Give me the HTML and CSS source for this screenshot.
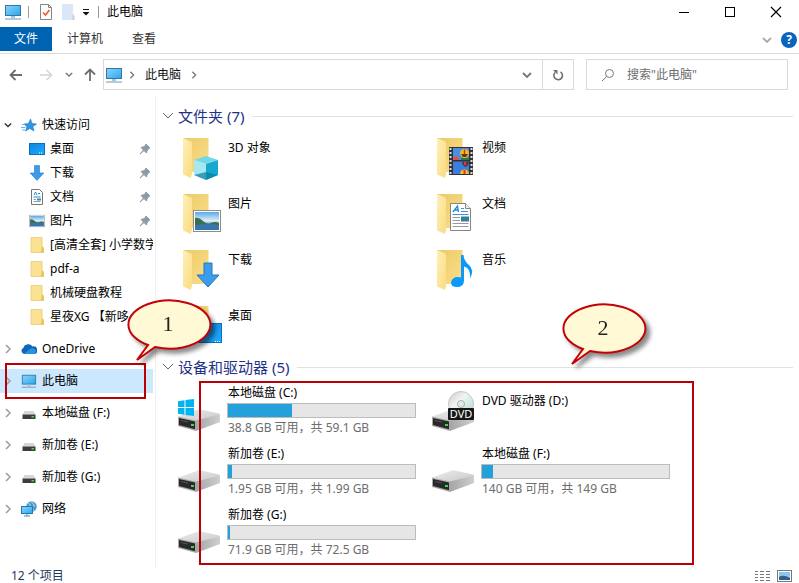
FILE: index.html
```html
<!DOCTYPE html>
<html lang="zh-CN">
<head>
<meta charset="utf-8">
<title>此电脑</title>
<link rel="stylesheet" href="styles.css">
</head>
<body>
<svg class="defs" width="0" height="0" aria-hidden="true">
  <defs>
    <linearGradient id="gBack" x1="0" y1="0" x2="1" y2="1"><stop offset="0" stop-color="#eec966"/><stop offset="1" stop-color="#f8df8c"/></linearGradient>
    <linearGradient id="gFlap" x1="0" y1="0" x2="1" y2="1"><stop offset="0" stop-color="#fff0b8"/><stop offset="1" stop-color="#fadb80"/></linearGradient>
    <linearGradient id="gScreen" x1="0" y1="0" x2="1" y2="1"><stop offset="0" stop-color="#8bd6fb"/><stop offset="1" stop-color="#2ba5ee"/></linearGradient>
    <linearGradient id="gDesk" x1="0" y1="0" x2="1" y2="1"><stop offset="0" stop-color="#0b86e0"/><stop offset="1" stop-color="#22aaff"/></linearGradient>
    <linearGradient id="gTop" x1="0" y1="0" x2="1" y2="1"><stop offset="0" stop-color="#ececec"/><stop offset="1" stop-color="#c9c9cb"/></linearGradient>
    <linearGradient id="gSide" x1="0" y1="0" x2="1" y2="0"><stop offset="0" stop-color="#a5a5a8"/><stop offset="1" stop-color="#cfcfd1"/></linearGradient>
    <linearGradient id="gSky" x1="0" y1="0" x2="0" y2="1"><stop offset="0" stop-color="#5aa9e6"/><stop offset="0.5" stop-color="#dff1fa"/><stop offset="0.7" stop-color="#4b87a8"/><stop offset="1" stop-color="#2e5f92"/></linearGradient>
    <linearGradient id="gDisc" x1="0" y1="0" x2="1" y2="1"><stop offset="0" stop-color="#c9cbd0"/><stop offset="0.4" stop-color="#f3f3f5"/><stop offset="0.6" stop-color="#d3efe6"/><stop offset="1" stop-color="#c4c6cb"/></linearGradient>
    <symbol id="folder" viewBox="0 0 48 48">
      <path d="M7 2H32.500V36H12Z" fill="url(#gBack)"/>
      <path d="M7 2L16 6V37L15 42L7 38.500Z" fill="url(#gFlap)"/>
    </symbol>
    <symbol id="folder-small" viewBox="0 0 16 16">
      <path d="M2 .5H13V9L14.500 11V15.500H2Z" fill="#fbe293" stroke="#ecca6c" stroke-width=".8"/>
      <path d="M13 9L12 15.500H14.500V11Z" fill="#e6bc55"/>
    </symbol>
    <symbol id="monitor" viewBox="0 0 18 16">
      <rect x="1.500" y="1.500" width="15" height="10" fill="url(#gScreen)" stroke="#35789f"/>
      <path d="M7 12h4v2H7z" fill="#9fc7df"/><path d="M1 15h16" stroke="#7596a9"/>
    </symbol>
    <symbol id="drive" viewBox="0 0 48 48">
      <path d="M2 29.500L22 22.500Q23 22 24 22.300L43 26.500Q44 27 44 28L20 34Z" fill="url(#gTop)"/>
      <path d="M20 33.500L44 27.500V35L20 44Z" fill="url(#gSide)"/>
      <path d="M2 29.500L20 33.500V44L2 39Z" fill="#a9a9ab"/>
      <path d="M3 31L19 34.500V42.300L3 38Z" fill="#29292b"/>
      <path d="M5 33.500L12 35" stroke="#555" /><rect x="15" y="37" width="3" height="2" fill="#2fe52f"/>
    </symbol>
    <symbol id="drive-small" viewBox="0 0 16 16">
      <path d="M3.500 6H12.500L14.500 9.500H1.500Z" fill="#d6d6d8"/><rect x="1.500" y="9.500" width="13" height="4.500" fill="#3d3d3f"/><rect x="10.500" y="11" width="2.500" height="1.500" fill="#38e038"/>
    </symbol>
    <symbol id="arrow-down" viewBox="0 0 24 26">
      <path d="M8 1H16V13H23L12 25L1 13H8Z" fill="#3c9beb" stroke="#2078c2"/>
    </symbol>
    <symbol id="chev-right" viewBox="0 0 8 10"><path d="M2 1L6 5L2 9" fill="none" stroke="currentColor" stroke-width="1.600"/></symbol>
    <symbol id="chev-down" viewBox="0 0 10 8"><path d="M1 2L5 6L9 2" fill="none" stroke="currentColor" stroke-width="1.800"/></symbol>
    <symbol id="chev-wide" viewBox="0 0 12 8"><path d="M1 1L6 6L11 1" fill="none" stroke="currentColor"/></symbol>
    <symbol id="pin" viewBox="0 0 12 12"><path d="M7 1L11 5L9.500 5.500L8 8L7.500 10L5 7.500L1 11L4.500 7L2 4.500L4 4L6.500 2.500Z" fill="#8c9aa6" stroke="#8c9aa6" stroke-linejoin="round"/></symbol>
    <symbol id="photo" viewBox="0 0 28 22">
      <rect x=".5" y=".5" width="27" height="21" fill="#fff" stroke="#8d8d8d"/><rect x="2" y="2" width="24" height="18" fill="url(#gSky)"/>
      <path d="M2 8Q6 7 10 11T18 13T26 13V15H2Z" fill="#3c6e50"/><path d="M2 15.500Q14 13 26 15V20H2Z" fill="#3a74ad"/>
    </symbol>
  </defs>
</svg>

<div class="window">
  <header class="titlebar">
    <svg class="app-icon" viewBox="0 0 18 16"><use href="#monitor"/></svg>
    <span class="divider"></span>
    <button class="quick" aria-label="属性"><svg width="14" height="16" viewBox="0 0 14 16"><path d="M1.500.5H9.500L12.500 3.500V15.500H1.500Z" fill="#fff" stroke="#858585"/><path d="M9.500.5V3.500H12.500" fill="none" stroke="#858585"/><path d="M4 8.500L6.500 11L10.500 6" fill="none" stroke="#ec5a24" stroke-width="1.600"/></svg></button>
    <button class="quick" aria-label="新建文件夹"><svg width="14" height="16" viewBox="0 0 14 16"><path d="M1 0H12V10L13.500 12V16H1Z" fill="#dbe6f6"/><path d="M12 10L11 16H13.500V12Z" fill="#c3d3ea"/></svg></button>
    <button class="quick quick-more" aria-label="自定义快速访问工具栏"><svg width="8" height="8" viewBox="0 0 8 8"><path d="M1 1.500H7" stroke="#111"/><path d="M.5 4H7.500L4 7.500Z" fill="#111"/></svg></button>
    <span class="divider"></span>
    <h1 class="title">此电脑</h1>
    <div class="window-buttons">
      <button aria-label="最小化"><svg width="12" height="12" viewBox="0 0 12 12"><path d="M1 6.500H11" stroke="#000"/></svg></button>
      <button aria-label="最大化"><svg width="12" height="12" viewBox="0 0 12 12"><rect x="1.500" y="1.500" width="9" height="9" fill="none" stroke="#000"/></svg></button>
      <button aria-label="关闭"><svg width="12" height="12" viewBox="0 0 12 12"><path d="M1 1L11 11M11 1L1 11" stroke="#000" stroke-width="1.200"/></svg></button>
    </div>
  </header>

  <div class="ribbon">
    <button class="tab tab-file">文件</button>
    <button class="tab">计算机</button>
    <button class="tab">查看</button>
    <div class="ribbon-end">
      <button class="plain light" aria-label="展开功能区"><svg width="10" height="8"><use href="#chev-down"/></svg></button>
      <button class="help" aria-label="帮助">?</button>
    </div>
  </div>

  <div class="toolbar">
    <div class="history">
      <button class="plain" aria-label="后退"><svg width="14" height="14" viewBox="0 0 14 14"><path d="M13 7H2M6.500 2L1.500 7L6.500 12" fill="none" stroke="#6d6d6d" stroke-width="1.800"/></svg></button>
      <button class="plain" aria-label="前进"><svg width="14" height="14" viewBox="0 0 14 14"><path d="M1 7H12M7.500 2L12.500 7L7.500 12" fill="none" stroke="#d5d5d5" stroke-width="1.500"/></svg></button>
      <button class="plain history-more" aria-label="最近浏览的位置"><svg width="8" height="7" viewBox="0 0 10 8"><use href="#chev-down"/></svg></button>
      <button class="plain" aria-label="上移"><svg width="14" height="14" viewBox="0 0 14 14"><path d="M7 13V2M2 6.500L7 1.500L12 6.500" fill="none" stroke="#6d6d6d" stroke-width="1.800"/></svg></button>
    </div>
    <div class="address">
      <svg class="address-icon" viewBox="0 0 18 16"><use href="#monitor"/></svg>
      <svg class="crumb-arrow" viewBox="0 0 8 10"><use href="#chev-right"/></svg>
      <button class="crumb">此电脑</button>
      <svg class="crumb-arrow" viewBox="0 0 8 10"><use href="#chev-right"/></svg>
      <button class="address-button address-more" aria-label="以前的位置"><svg width="10" height="8"><use href="#chev-down"/></svg></button>
      <button class="address-button refresh" aria-label="刷新"><svg width="12" height="12" viewBox="0 0 12 12"><path d="M8.500 2.800A4.300 4.300 0 1 1 3 3.500" fill="none" stroke="#6d6d6d" stroke-width="1.600"/><path d="M1 1H5.500V5.500Z" fill="#6d6d6d"/></svg></button>
    </div>
    <label class="search">
      <svg width="14" height="14" viewBox="0 0 14 14"><circle cx="8.500" cy="5.500" r="4" fill="none" stroke="#777"/><path d="M5.700 8.500L1 13" stroke="#777"/></svg>
      <input type="search" aria-label="搜索" placeholder="搜索&quot;此电脑&quot;">
    </label>
  </div>

  <div class="body">
    <nav class="sidebar" aria-label="导航">
      <ul class="tree">
        <li>
          <a class="node" href="#"><svg class="twist open" viewBox="0 0 10 8"><use href="#chev-down"/></svg><svg class="icon" viewBox="0 0 16 16"><path d="M9.500 2L11 6.500L15.500 7L11.800 9.500L13 14L8.800 11.500L4.500 14L6 9.800L3 7L7.500 6.500Z" fill="#2b95e6" stroke="#1675c4" stroke-width=".6"/><path d="M1 7.500H4M0 10.500H4.500M1 13H4" stroke="#64b5f1"/></svg><span class="label">快速访问</span></a>
          <ul class="branch">
            <li><a class="node" href="#"><svg class="icon" viewBox="0 0 16 16"><rect x=".5" y="2.500" width="15" height="11" fill="url(#gDesk)" stroke="#0c6fbd"/><path d="M10 12h4" stroke="#fff" stroke-dasharray="1 1"/></svg><span class="label">桌面</span><svg class="pin"><use href="#pin"/></svg></a></li>
            <li><a class="node" href="#"><svg class="icon" viewBox="0 0 24 26"><use href="#arrow-down"/></svg><span class="label">下载</span><svg class="pin"><use href="#pin"/></svg></a></li>
            <li><a class="node" href="#"><svg class="icon" viewBox="0 0 16 16"><path d="M2.500.5H10.500L13.500 3.500V15.500H2.500Z" fill="#fff" stroke="#777"/><path d="M5 6L6.500 3L8 6M9 4.500H11M4.500 8H11.500" fill="none" stroke="#268bd2"/><path d="M4.500 10.500H7M4.500 12.500H11.500" stroke="#8aa"/><path d="M8 9.500H12V11.500H8Z" fill="#3c86b9"/></svg><span class="label">文档</span><svg class="pin"><use href="#pin"/></svg></a></li>
            <li><a class="node" href="#"><svg class="icon" viewBox="0 0 28 22"><use href="#photo"/></svg><span class="label">图片</span><svg class="pin"><use href="#pin"/></svg></a></li>
            <li><a class="node" href="#"><svg class="icon"><use href="#folder-small"/></svg><span class="label">[高清全套] 小学数学</span></a></li>
            <li><a class="node" href="#"><svg class="icon"><use href="#folder-small"/></svg><span class="label">pdf-a</span></a></li>
            <li><a class="node" href="#"><svg class="icon"><use href="#folder-small"/></svg><span class="label">机械硬盘教程</span></a></li>
            <li><a class="node" href="#"><svg class="icon"><use href="#folder-small"/></svg><span class="label">星夜XG 【新哆</span></a></li>
          </ul>
        </li>
        <li><a class="node" href="#"><svg class="twist" viewBox="0 0 8 10"><use href="#chev-right"/></svg><svg class="icon" viewBox="0 0 16 16"><path d="M3.500 13A3.300 3.300 0 0 1 2.500 6.700A5 5 0 0 1 11.500 5.500A3.800 3.800 0 0 1 13.500 13Z" fill="#0f67b8"/><path d="M3 13L9 8Q10 6.800 12.500 7.500A3 3 0 0 1 13.500 13Z" fill="#2a93e0"/></svg><span class="label">OneDrive</span></a></li>
        <li class="marked">
          <a class="node selected" href="#" aria-current="page"><svg class="twist" viewBox="0 0 8 10"><use href="#chev-right"/></svg><svg class="icon" viewBox="0 0 18 16"><use href="#monitor"/></svg><span class="label">此电脑</span></a>
          <span class="frame frame-node"></span>
          <svg class="callout callout-node" viewBox="0 0 96 72"><path d="M22 48A41 24 0 1 1 29 50L11 63Z"/><text x="42" y="34">1</text></svg>
        </li>
        <li><a class="node" href="#"><svg class="twist" viewBox="0 0 8 10"><use href="#chev-right"/></svg><svg class="icon"><use href="#drive-small"/></svg><span class="label">本地磁盘 (F:)</span></a></li>
        <li><a class="node" href="#"><svg class="twist" viewBox="0 0 8 10"><use href="#chev-right"/></svg><svg class="icon"><use href="#drive-small"/></svg><span class="label">新加卷 (E:)</span></a></li>
        <li><a class="node" href="#"><svg class="twist" viewBox="0 0 8 10"><use href="#chev-right"/></svg><svg class="icon"><use href="#drive-small"/></svg><span class="label">新加卷 (G:)</span></a></li>
        <li><a class="node" href="#"><svg class="twist" viewBox="0 0 8 10"><use href="#chev-right"/></svg><svg class="icon" viewBox="0 0 16 16"><circle cx="10.500" cy="5.500" r="5.200" fill="#4b9cc9"/><path d="M7 2Q10 3 9 6T13 9M10 .5Q14 3 13 6" fill="none" stroke="#b9dfef"/><rect x=".5" y="5.500" width="11" height="7" fill="url(#gScreen)" stroke="#2178b5"/><path d="M3 15H9M6 13V15" stroke="#5b8ca8"/></svg><span class="label">网络</span></a></li>
      </ul>
    </nav>

    <main class="content">
      <section>
        <h2 class="group"><svg width="12" height="8"><use href="#chev-wide"/></svg>文件夹 (7)</h2>
        <ul class="tiles">
          <li class="tile"><svg class="tile-icon" viewBox="0 0 48 48"><use href="#folder"/><path d="M18 24L30 20L42 24L30 28Z" fill="#6fd8ea"/><path d="M18 24L30 28V44L18 39Z" fill="#a6e8ef"/><path d="M42 24L30 28V44L42 39Z" fill="#16a9cf"/><path d="M30 36L42 39L30 44L18 39Z" fill="#087f9f" opacity=".7"/></svg><span class="tile-name">3D 对象</span></li>
          <li class="tile"><svg class="tile-icon" viewBox="0 0 48 48"><use href="#folder"/><rect x="19" y="11" width="24" height="28" fill="#333"/><path d="M20.500 12V39M41.500 12V39" stroke="#ddd" stroke-width="2" stroke-dasharray="2 2"/><rect x="23" y="12" width="16" height="12" fill="#4a8fe6"/><rect x="23" y="25.500" width="16" height="12.500" fill="#3c7ddd"/><path d="M30 17.500A4.500 4.500 0 0 1 39 17.500Q38.500 20 36 22H33Q30.500 20 30 17.500Z" fill="#f5bd1c"/><path d="M34.500 13.500V20" stroke="#d32f1e" stroke-width="1.500"/><path d="M31 18H38L36 21H33Z" fill="#5a3a20"/><path d="M23 22L26 20L29 22V24H23Z" fill="#e2533f"/><path d="M31 22H39V24H31Z" fill="#2f7a3a"/><path d="M32 26H39Q39 29 35.500 31Q32 29 32 26Z" fill="#43403a"/><path d="M34 26H36V29H34Z" fill="#e33"/><path d="M30 38A4.500 4.500 0 0 1 39 38Z" fill="#f5c021"/><path d="M33.500 38V34H35.500V38Z" fill="#d33"/></svg><span class="tile-name">视频</span></li>
          <li class="tile"><svg class="tile-icon" viewBox="0 0 48 48"><use href="#folder"/><use href="#photo" x="17" y="18" width="28" height="22"/></svg><span class="tile-name">图片</span></li>
          <li class="tile"><svg class="tile-icon" viewBox="0 0 48 48"><use href="#folder"/><path d="M20.500 11.500H35.500L40.500 16.500V38.500H20.500Z" fill="#fff" stroke="#858585"/><path d="M35.500 11.500V16.500H40.500" fill="#eee" stroke="#858585"/><path d="M23 20L27.500 14L28.500 20M24.500 18H28" fill="none" stroke="#1e88d8" stroke-width="1.300"/><path d="M31 16.500H34M31 19.500H38M22.500 22.500H38.500" stroke="#3298de"/><path d="M22.500 25.500H30M22.500 28.500H30M22.500 31.500H38.500M22.500 34.500H38.500" stroke="#999"/><rect x="31" y="24.500" width="8" height="5" fill="#387c9c"/></svg><span class="tile-name">文档</span></li>
          <li class="tile"><svg class="tile-icon" viewBox="0 0 48 48"><use href="#folder"/><use href="#arrow-down" x="20" y="14" width="24" height="26"/></svg><span class="tile-name">下载</span></li>
          <li class="tile"><svg class="tile-icon" viewBox="0 0 48 48"><use href="#folder"/><path d="M31 7H33.500Q34 13 38.500 16.500Q45 22 40 30.500Q41 20 34 18.500V33Q33.500 39 27 39Q21 39 21 34.500Q22 29 28 29Q30 29 31 29.600Z" fill="#0a9afa"/></svg><span class="tile-name">音乐</span></li>
          <li class="tile"><svg class="tile-icon" viewBox="0 0 48 48"><use href="#folder"/><rect x="17.500" y="19.500" width="28" height="19" fill="url(#gDesk)" stroke="#0c6fbd"/><path d="M39 37.500H45" stroke="#fff" stroke-dasharray="1 1"/></svg><span class="tile-name">桌面</span></li>
        </ul>
      </section>

      <section class="devices">
        <h2 class="group"><svg width="12" height="8"><use href="#chev-wide"/></svg>设备和驱动器 (5)</h2>
        <ul class="tiles">
          <li class="device"><svg class="tile-icon" viewBox="0 0 48 48"><use href="#drive"/><path d="M2 14.200L8.500 13.200V20H2ZM9.500 13L18 12V20H9.500ZM2 21H8.500V27.700L2 26.800ZM9.500 21H18V29L9.500 27.900Z" fill="#00b4f1"/></svg>
            <div class="device-info"><span class="device-name">本地磁盘 (C:)</span><progress value="34" max="100" aria-label="C 盘已用空间"></progress><span class="device-space">38.8 GB 可用，共 59.1 GB</span></div></li>
          <li class="device optical"><svg class="tile-icon" viewBox="0 0 48 48"><use href="#drive"/><circle cx="31" cy="17" r="12.500" fill="url(#gDisc)" stroke="#c5c5c8"/><circle cx="31" cy="17" r="3.500" fill="#eee" stroke="#aaa"/><circle cx="31" cy="17" r="1.500" fill="#fff" stroke="#bbb" stroke-width=".5"/><rect x="18" y="21" width="26" height="12" rx="1" fill="#161616"/><text class="disc-label" x="31" y="31">DVD</text></svg>
            <div class="device-info"><span class="device-name">DVD 驱动器 (D:)</span></div></li>
          <li class="device"><svg class="tile-icon"><use href="#drive"/></svg>
            <div class="device-info"><span class="device-name">新加卷 (E:)</span><progress value="2" max="100" aria-label="E 盘已用空间"></progress><span class="device-space">1.95 GB 可用，共 1.99 GB</span></div></li>
          <li class="device"><svg class="tile-icon"><use href="#drive"/></svg>
            <div class="device-info"><span class="device-name">本地磁盘 (F:)</span><progress value="6" max="100" aria-label="F 盘已用空间"></progress><span class="device-space">140 GB 可用，共 149 GB</span></div></li>
          <li class="device"><svg class="tile-icon"><use href="#drive"/></svg>
            <div class="device-info"><span class="device-name">新加卷 (G:)</span><progress value="1" max="100" aria-label="G 盘已用空间"></progress><span class="device-space">71.9 GB 可用，共 72.5 GB</span></div></li>
        </ul>
        <span class="frame frame-devices"></span>
        <svg class="callout callout-devices" viewBox="0 0 96 72"><path d="M22 48A41 24 0 1 1 29 50L11 63Z"/><text x="42" y="34">2</text></svg>
      </section>
    </main>
  </div>

  <footer class="status">
    <span>12 个项目</span>
    <div class="views">
      <button class="plain" aria-label="详细信息"><svg width="16" height="12" viewBox="0 0 16 12"><path d="M0 1.500H4M0 4.500H4M0 7.500H4M0 10.500H4" stroke="#777" stroke-dasharray="3 1"/><path d="M5 1.500H9M5 4.500H9M5 7.500H9M5 10.500H9M11 1.500H15M11 4.500H15M11 7.500H15M11 10.500H15" stroke="#777"/></svg></button>
      <button class="plain" aria-label="大图标"><svg width="16" height="12" viewBox="0 0 16 12"><rect x=".5" y=".5" width="14" height="11" fill="#fff" stroke="#777"/><rect x="2" y="2" width="11" height="8" fill="#8cc6ee"/><path d="M2 7Q6 4 13 8V10H2Z" fill="#315f8c"/></svg></button>
    </div>
  </footer>
</div>
</body>
</html>
```
FILE: styles.css
```css
* { box-sizing: border-box; }

body {
  margin: 0;
  background: #fff;
  color: #111;
  font: 12px/16px "Noto Sans", "Noto Sans CJK SC", sans-serif;
}

ul { list-style: none; margin: 0; padding: 0; }
a { color: inherit; text-decoration: none; }
svg { display: block; flex: none; }

button {
  margin: 0;
  padding: 0;
  border: 0;
  background: none;
  color: inherit;
  font: inherit;
}

.defs { position: absolute; }

.window {
  display: flex;
  flex-direction: column;
  min-height: 100vh;
}

/* Title bar */
.titlebar {
  display: flex;
  align-items: center;
  height: 24px;
  margin-bottom: 3px;
  padding-left: 4px;
}

.app-icon { width: 18px; height: 16px; }
.divider { width: 1px; height: 12px; margin: 0 6px; background: #999; }
.quick { display: flex; width: 22px; justify-content: center; }
.quick-more { width: 14px; }
.quick-more + .divider { margin: 0 8px 0 5px; }
.title { margin: 0; font-size: 12px; font-weight: 400; color: #000; }
.window-buttons { display: flex; height: 24px; margin-left: auto; }
.window-buttons button { display: grid; place-items: center; width: 46px; }

/* Ribbon */
.ribbon {
  display: flex;
  gap: 1px;
  height: 27px;
  border-bottom: 1px solid #dadbdc;
}

.tab { height: 24px; padding: 0 14px; color: #333; }
.tab-file { background: #0063b1; color: #fff; }

.ribbon-end {
  display: flex;
  align-items: center;
  gap: 9px;
  margin-left: auto;
  padding-right: 2px;
}

.plain { display: grid; place-items: center; color: #777; }
.light { color: #aaa; }

.help {
  width: 16px;
  height: 16px;
  border-radius: 50%;
  background: #0a64bd;
  color: #fff;
  font-weight: 700;
}

/* Address row */
.toolbar {
  display: flex;
  height: 42px;
  padding: 5px 11px 6px 9px;
}

.history { display: flex; align-items: center; width: 94px; }
.history .plain { width: 14px; margin-right: 16px; }
.history .plain:nth-child(2) { margin-right: 0; }
.history .history-more { width: 8px; margin: 0 10px 0 12px; }

.address {
  display: flex;
  align-items: center;
  flex: 1;
  margin-right: 12px;
  border: 1px solid #d9d9d9;
  color: #777;
}

.address-icon { width: 18px; height: 16px; margin-left: 1px; }
.crumb-arrow { width: 8px; height: 8px; margin: 0 5px; }
.crumb { padding: 0 4px; color: #111; }
.address-button { display: grid; place-items: center; align-self: stretch; width: 30px; }
.address-more { margin-left: auto; }
.refresh { width: 31px; border-left: 1px solid #d9d9d9; }

.search {
  display: flex;
  align-items: center;
  gap: 12px;
  width: 202px;
  padding-left: 14px;
  border: 1px solid #d9d9d9;
}

.search input {
  flex: 1;
  min-width: 0;
  padding: 0;
  border: 0;
  outline: 0;
  background: none;
  font: inherit;
}

.search input::placeholder { color: #6d6d6d; opacity: 1; }

/* Navigation tree */
.body { display: flex; flex: 1; }

.sidebar {
  flex: none;
  width: 156px;
  padding: 17px 2px 0 0;
  border-right: 1px solid #f0f0f0;
}

.tree { display: grid; grid-template-columns: 100%; gap: 8px; }

.node {
  display: flex;
  align-items: center;
  gap: 5px;
  height: 24px;
  padding-left: 4px;
  color: #000;
}

.branch .node { padding-left: 29px; }
.selected { background: #cce8ff; }
.twist { width: 8px; height: 10px; margin-right: 4px; color: #a0a0a0; }
.open { color: #333; }
.icon { width: 16px; height: 16px; }
.label { flex: 1; min-width: 0; overflow: hidden; white-space: nowrap; }
.pin { width: 12px; height: 12px; margin-right: 2px; }
.marked { position: relative; }

/* Content */
.content { flex: 1; min-width: 0; padding: 8px 6px 0; }

.group {
  display: flex;
  align-items: center;
  gap: 4px;
  height: 24px;
  margin: 0 0 3px;
  color: #1e3287;
  font-size: 15px;
  font-weight: 400;
}

.group svg { color: #666; }
.group::after { content: ""; flex: 1; height: 1px; margin-left: 4px; background: #e2e2e2; }

.tiles {
  display: grid;
  grid-template-columns: repeat(auto-fill, 254px);
  padding-left: 14px;
}

.tile, .device { display: flex; gap: 3px; }
.tile { height: 56px; padding-top: 5px; }
.tile-icon { width: 48px; height: 48px; }
.tile-name { padding: 4px 1px; color: #000; }

.devices { position: relative; }
.device { height: 61px; padding-top: 3px; }
.device .tile-icon { margin-top: 2px; }
.device-info { display: grid; align-content: start; gap: 2px; width: 189px; }
.device-name, .device-space { padding-left: 1px; white-space: nowrap; }
.device-name { color: #000; }
.device-space { color: #6d6d6d; }
.optical .device-info { padding-top: 8px; }

progress {
  display: block;
  width: 100%;
  height: 15px;
  border: 1px solid #bcbcbc;
  background: #e6e6e6;
  appearance: none;
}

progress::-webkit-progress-bar { background: #e6e6e6; }
progress::-webkit-progress-value { background: #26a0da; }

.disc-label { fill: #fff; font-size: 11px; text-anchor: middle; }

/* Annotations */
.frame { position: absolute; z-index: 2; border: 2px solid #b80006; pointer-events: none; }
.frame-node { inset: -6px 7px -6px 5px; }
.frame-devices { top: 26px; bottom: 0; left: 37px; width: 495px; }

.callout {
  position: absolute;
  z-index: 3;
  width: 96px;
  height: 72px;
  overflow: visible;
  filter: drop-shadow(4px 4px 2px rgba(0, 0, 0, 0.45));
}

.callout path { fill: #fff9d6; stroke: #c40008; stroke-width: 2; }
.callout text { fill: #222; font: 22px "Liberation Serif", serif; text-anchor: middle; }
.callout-node { top: -72px; left: 126px; }
.callout-devices { top: -54px; left: 399px; }

/* Status bar */
.status {
  display: flex;
  align-items: center;
  justify-content: space-between;
  height: 14px;
  padding: 0 6px 0 11px;
  color: #1e395b;
}

.views { display: flex; gap: 6px; }
```
